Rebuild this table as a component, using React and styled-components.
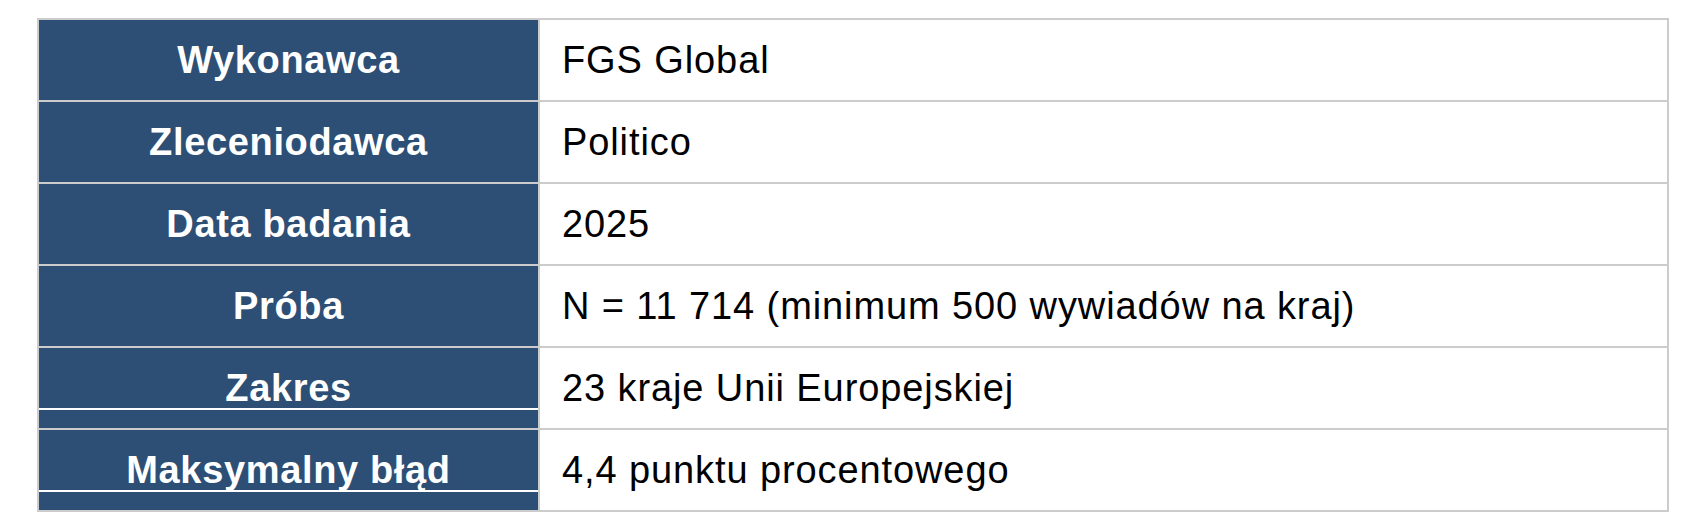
import React from "react";
import styled, { createGlobalStyle } from "styled-components";

const GlobalStyle = createGlobalStyle`
	html, body {
		margin: 0;
		padding: 0;
		background: #ffffff;
		font-family: "Liberation Sans", Arial, Helvetica, sans-serif;
	}
`;

const Page = styled.div`
	padding: 18px 22px 16px 37px;
`;

const Table = styled.div`
	display: grid;
	grid-template-columns: 499px 1fr;
	grid-auto-rows: 80px;
	gap: 2px;
	background: #cccccc;
	border: 2px solid #cccccc;
`;

const Label = styled.div`
	position: relative;
	display: flex;
	align-items: center;
	justify-content: center;
	background: #2d4f76;
	color: #ffffff;
	font-size: 38px;
	font-weight: 700;
	letter-spacing: 0.65px;

	${({ $underline }) =>
		$underline &&
		`
		&::after {
			content: "";
			position: absolute;
			left: 0;
			right: 0;
			top: 60px;
			height: 2px;
			background: #ffffff;
		}
	`}
`;

const LabelText = styled.span`
	position: relative;
	z-index: 1;
`;

const Value = styled.div`
	display: flex;
	align-items: center;
	padding-left: 22px;
	background: #ffffff;
	color: #000000;
	font-size: 38px;
	letter-spacing: 0.9px;
`;

const rows = [
	{ label: "Wykonawca", value: "FGS Global" },
	{ label: "Zleceniodawca", value: "Politico" },
	{ label: "Data badania", value: "2025" },
	{ label: "Próba", value: "N = 11 714 (minimum 500 wywiadów na kraj)" },
	{ label: "Zakres", value: "23 kraje Unii Europejskiej", underline: true },
	{ label: "Maksymalny błąd", value: "4,4 punktu procentowego", underline: true },
];

const App = () => {
	return (
		<Page>
			<GlobalStyle />
			<Table>
				{rows.map((row) => (
					<React.Fragment key={row.label}>
						<Label $underline={row.underline}>
							<LabelText>{row.label}</LabelText>
						</Label>
						<Value>{row.value}</Value>
					</React.Fragment>
				))}
			</Table>
		</Page>
	);
};

export default App;
